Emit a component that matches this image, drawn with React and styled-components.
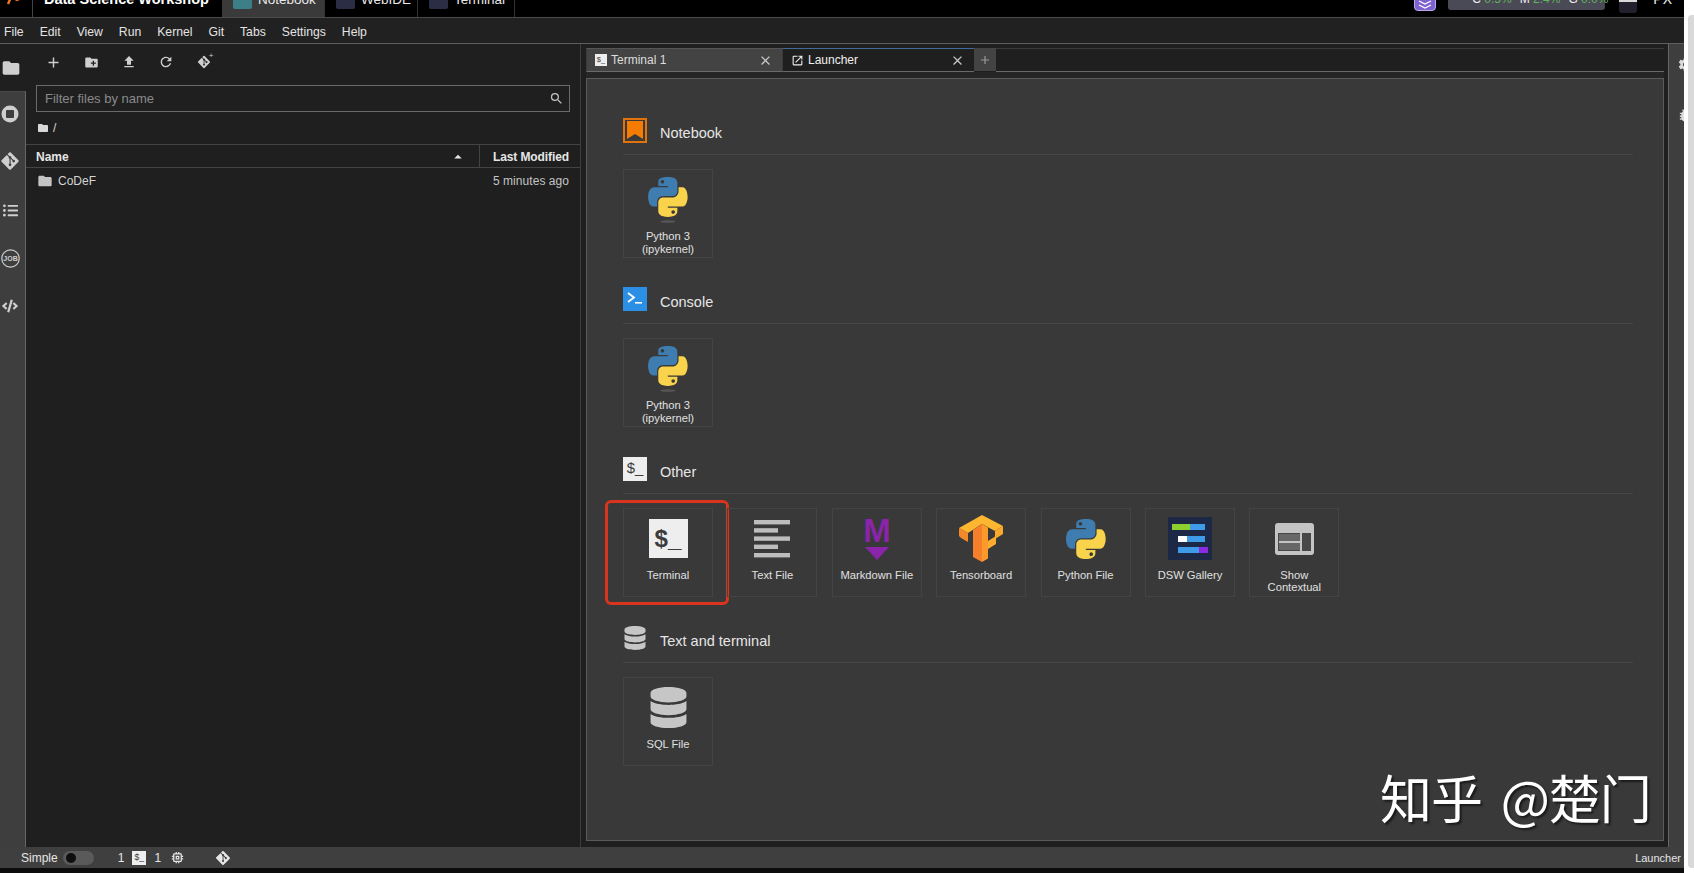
import React from 'react'
import styled, { createGlobalStyle } from 'styled-components'
import { FaGitAlt, FaDatabase, FaListUl, FaCode } from 'react-icons/fa'
import {
  MdAdd, MdCreateNewFolder, MdFileUpload, MdRefresh, MdFolder, MdSearch, MdClose,
  MdOpenInNew, MdArrowDropUp, MdSettings, MdBugReport, MdMemory
} from 'react-icons/md'

const GlobalStyle = createGlobalStyle`
    html, body {
        margin: 0;
        padding: 0;
        background: #fff;
        overflow: hidden;
    }
    * {
        box-sizing: border-box;
    }
`

const Page = styled.div`
    position: relative;
    width: 1694px;
    height: 873px;
    display: flex;
    overflow: hidden;
    font-family: "Liberation Sans", Arial, sans-serif;
`
const Frame = styled.div`
    width: 1684px;
    height: 100%;
    display: flex;
    flex-direction: column;
    background: #0c0c0c;
`
const ScrollStrip = styled.div`
    width: 10px;
    height: 100%;
    padding: 15px 0 5px 4px;
    background: #fff;
`
const ScrollThumb = styled.div`
    width: 100%;
    height: 100%;
    background: #d9d9d9;
    border-radius: 4px 0 0 4px;
`

/* top bar, cut by the top of the window */
const TopBar = styled.div`
    height: 18px;
    flex: none;
    display: flex;
    align-items: flex-end;
    overflow: hidden;
    background: #000;
    border-bottom: 1px solid #4a4a4a;
    color: #fff;
`
const LogoCell = styled.div`
    width: 33px;
    height: 36px;
    flex: none;
    display: flex;
    align-items: center;
    padding-left: 5px;
    border-right: 1px solid #444;
`
const Brand = styled.div`
    width: 189px;
    height: 36px;
    flex: none;
    padding-left: 11px;
    line-height: 36px;
    font-size: 14.5px;
    font-weight: 700;
`
const TopTab = styled.div`
    width: ${props => props.$width}px;
    height: 36px;
    flex: none;
    display: flex;
    align-items: center;
    gap: 6px;
    padding-left: 11px;
    font-size: 13.5px;
    color: #e8e8e8;
    background: ${props => props.$active ? '#3a3a3a' : 'transparent'};
    border-right: 1px solid #333;
`
const TopTabIcon = styled.div`
    width: 19px;
    height: 20px;
    border-radius: 2px;
    background: ${props => props.$color};
`
const TopRight = styled.div`
    margin-left: auto;
    display: flex;
    align-items: flex-end;
    padding-bottom: 7px;
    padding-right: 12px;
`
const PurpleBadge = styled.div`
    width: 22px;
    height: 22px;
    margin-right: 12px;
    margin-bottom: -1px;
    display: flex;
    align-items: flex-end;
    justify-content: center;
    border-radius: 4px;
    background: #7e62d0;
    border: 1px solid #b9a8ee;
`
const ResourceBox = styled.div`
    width: 157px;
    height: 24px;
    margin-right: 14px;
    padding: 0 24px;
    border-radius: 3px;
    background: #4a4a56;
    font-size: 12px;
    line-height: 26px;
    color: #eee;
    white-space: nowrap;
`
const Green = styled.span`
    color: #63b35f;
    margin-right: 8px;
`
const Avatar = styled.div`
    width: 18px;
    height: 24px;
    margin-right: 16px;
    margin-bottom: -3px;
    border-radius: 0 0 3px 3px;
    background: linear-gradient(#d9d9d9 0 55%, #22202c 55%);
`
const UserText = styled.div`
    font-size: 14px;
    line-height: 14px;
    margin-bottom: 4px;
    color: #eee;
`

const MenuBar = styled.div`
    height: 26px;
    flex: none;
    display: flex;
    align-items: center;
    gap: 16px;
    padding: 3px 4px 0;
    background: #212121;
    border-bottom: 1px solid #5e5e5e;
    font-size: 12.2px;
    color: #e4e4e4;
`

const Body = styled.div`
    flex: 1;
    min-height: 0;
    display: flex;
    background: #1f1f1f;
`
const SideBar = styled.div`
    width: 26px;
    flex: none;
    display: flex;
    flex-direction: column;
    color: #cfcfcf;
`
const SideButton = styled.div`
    height: ${props => props.$height || 48}px;
    flex: none;
    display: flex;
    align-items: center;
    justify-content: center;
    padding-right: 5px;
`
const SideRest = styled.div`
    flex: 1;
    display: flex;
    flex-direction: column;
    background: #3e3e3e;
    border-top: 1px solid #4a4a4a;
    border-right: 1px solid #666;
`

const FilePanel = styled.div`
    width: 555px;
    flex: none;
    display: flex;
    flex-direction: column;
    background: #1f1f1f;
    border-right: 1px solid #3d3d3d;
`
const FileTools = styled.div`
    height: 41px;
    flex: none;
    display: flex;
    align-items: center;
    padding: 0 0 5px 9px;
    color: #cfcfcf;
`
const ToolButton = styled.div`
    width: 37.5px;
    display: flex;
    justify-content: center;
    position: relative;
`
const Spark = styled.span`
    position: absolute;
    top: -3px;
    right: 9px;
    font-size: 8px;
    line-height: 8px;
`
const FilterBox = styled.div`
    height: 27px;
    flex: none;
    margin: 0 10px;
    display: flex;
    align-items: center;
    padding: 0 5px 0 8px;
    border: 1px solid #6a6a6a;
    color: #c4c4c4;
`
const FilterInput = styled.input`
    flex: 1;
    min-width: 0;
    border: 0;
    outline: 0;
    padding: 0;
    background: transparent;
    font-family: inherit;
    font-size: 13px;
    color: #eee;
    &::placeholder {
        color: #8a8a8a;
        opacity: 1;
    }
`
const Crumbs = styled.div`
    height: 32px;
    flex: none;
    display: flex;
    align-items: center;
    gap: 4px;
    padding-left: 11px;
    font-size: 12px;
    color: #d8d8d8;
`
const ListHeader = styled.div`
    height: 24px;
    flex: none;
    display: flex;
    align-items: center;
    border-top: 1px solid #444;
    border-bottom: 1px solid #444;
    font-size: 12px;
    font-weight: 700;
    color: #e6e6e6;
`
const NameHead = styled.div`
    flex: 1;
    display: flex;
    align-items: center;
    justify-content: space-between;
    height: 100%;
    padding: 1px 12px 0 10px;
    border-right: 1px solid #444;
`
const ModifiedHead = styled.div`
    width: 100px;
    padding: 1px 11px 0 0;
    text-align: right;
    letter-spacing: -0.1px;
`
const FileRow = styled.div`
    height: 24px;
    flex: none;
    display: flex;
    align-items: center;
    gap: 5px;
    padding: 2px 11px 0;
    font-size: 12px;
    color: #d4d4d4;
`
const FileTime = styled.div`
    margin-left: auto;
    color: #c4c4c4;
    letter-spacing: 0.05px;
`

const MainArea = styled.div`
    flex: 1;
    min-width: 0;
    display: flex;
    flex-direction: column;
    padding: 4px 4px 6px 5px;
`
const TabBar = styled.div`
    height: 24px;
    flex: none;
    display: flex;
`
const Tab = styled.div`
    width: ${props => props.$width}px;
    height: 24px;
    flex: none;
    display: flex;
    align-items: center;
    gap: 4px;
    padding: 0 8px;
    font-size: 12px;
    color: ${props => props.$active ? '#f0f0f0' : '#dedede'};
    background: ${props => props.$active ? '#1f1f1f' : '#434343'};
    border-top: 1px solid ${props => props.$active ? '#3f6a9a' : '#555'};
    border-bottom: 1px solid #6a6a6a;
    border-left: 1px solid #3a3a3a;
`
const TabClose = styled.div`
    margin-left: auto;
    display: flex;
    margin-right: 1px;
    color: #c8c8c8;
`
const PlusTab = styled.div`
    width: 22px;
    height: 23px;
    display: flex;
    align-items: center;
    justify-content: center;
    background: #434343;
    color: #9a9a9a;
`
const TabGap = styled.div`
    flex: 1;
    border-bottom: 1px solid #6a6a6a;
    border-top: 1px solid #3a3a3a;
`
const TabStrip = styled.div`
    height: 6px;
    flex: none;
    background: #262626;
`
const Launcher = styled.div`
    flex: 1;
    min-height: 0;
    padding: 39px 30px 0 36px;
    background: #393939;
    border: 1px solid #5a5a5a;
`
const Section = styled.div`
    margin-bottom: 29.3px;
`
const SectionHead = styled.div`
    height: 37px;
    display: flex;
    gap: 13px;
    border-bottom: 1px solid #464646;
`
const SectionTitle = styled.div`
    padding-top: 7px;
    font-size: 14.5px;
    color: #e6e6e6;
`
const SectionIcon = styled.div`
    width: 24px;
    height: 24px;
    flex: none;
    display: flex;
    align-items: center;
    justify-content: center;
    color: #c6c6c6;
`
const Cards = styled.div`
    display: flex;
    gap: 14.4px;
    margin-top: 14px;
`
const Card = styled.div`
    position: relative;
    width: 90px;
    height: 89px;
    flex: none;
    border: 1px solid #444;
    display: flex;
    flex-direction: column;
    align-items: center;
`
const CardIcon = styled.div`
    height: 60px;
    flex: none;
    display: flex;
    align-items: center;
    justify-content: center;
    color: #c6c6c6;
`
const CardLabel = styled.div`
    width: 88px;
    text-align: center;
    font-size: 11.2px;
    line-height: 12.5px;
    color: #e0e0e0;
`
const Highlight = styled.div`
    position: absolute;
    top: -9px;
    bottom: -9px;
    left: -19px;
    right: -17px;
    border: 3px solid #d8341e;
    border-radius: 6px;
    pointer-events: none;
`
const TerminalGlyph = styled.div`
    width: ${props => props.$size}px;
    height: ${props => props.$size}px;
    flex: none;
    display: flex;
    align-items: center;
    justify-content: center;
    background: #eeeeee;
    color: #3c3c3c;
    font-family: "Liberation Sans", Arial, sans-serif;
    font-size: ${props => props.$size * 0.62}px;
    font-weight: ${props => props.$size > 30 ? 700 : 400};
    line-height: 1;
`
const RightBar = styled.div`
    width: 16px;
    flex: none;
    display: flex;
    flex-direction: column;
    gap: 34px;
    padding: 12px 0 0 8px;
    overflow: hidden;
    background: #3e3e3e;
    border-left: 1px solid #666;
    color: #dcdcdc;
`

const StatusBar = styled.div`
    height: 21px;
    flex: none;
    display: flex;
    align-items: center;
    padding: 0 3px 0 21px;
    background: #3f3f3f;
    font-size: 12px;
    color: #e6e6e6;
`
const StatusToggle = styled.div`
    width: 31px;
    height: 14px;
    margin: 0 24px 0 5px;
    padding: 2px 3px;
    border-radius: 7px;
    background: #5a5a5a;
`
const ToggleKnob = styled.div`
    width: 10px;
    height: 10px;
    border-radius: 50%;
    background: #0e0e0e;
`
const StatusItem = styled.div`
    display: flex;
    align-items: center;
    margin-right: ${props => props.$gap || 0}px;
`
const StatusRight = styled.div`
    margin-left: auto;
    font-size: 11px;
`
const Foot = styled.div`
    height: 5px;
    flex: none;
`
const Watermark = styled.div`
    position: absolute;
    left: 1380px;
    top: 767px;
    font-family: "Noto Sans CJK SC", sans-serif;
    font-size: 52px;
    font-weight: 400;
    letter-spacing: -1px;
    word-spacing: 8px;
    line-height: 60px;
    color: #fff;
    white-space: nowrap;
    text-shadow: 2px 2px 2px rgba(0, 0, 0, 0.55);
`

const pythonBlue = "M54.919 0.001c-4.584.022-8.961.413-12.812 1.095C30.762 3.099 28.7 7.295 28.7 15.032v10.219h26.812v3.406H18.637c-7.792 0-14.616 4.684-16.75 13.594-2.462 10.213-2.571 16.586 0 27.25 1.906 7.938 6.458 13.594 14.25 13.594h9.219V70.344c0-8.85 7.657-16.656 16.75-16.656h26.781c7.455 0 13.406-6.138 13.406-13.625V15.032c0-7.266-6.13-12.725-13.406-13.937C64.282.328 59.502-.02 54.919.001zM40.419 8.22c2.77 0 5.031 2.299 5.031 5.125 0 2.816-2.262 5.094-5.031 5.094-2.78 0-5.031-2.278-5.031-5.094 0-2.826 2.252-5.125 5.031-5.125z"
const pythonYellow = "M85.638 28.657v11.906c0 9.231-7.826 17-16.75 17H42.106c-7.336 0-13.406 6.279-13.406 13.625v25.531c0 7.266 6.319 11.54 13.406 13.625 8.487 2.496 16.626 2.947 26.781 0 6.75-1.955 13.406-5.888 13.406-13.625V86.5H55.513v-3.405H95.7c7.792 0 10.696-5.436 13.406-13.594 2.799-8.399 2.68-16.476 0-27.25-1.926-7.757-5.604-13.594-13.406-13.594H85.638zM70.575 93.313c2.78 0 5.031 2.278 5.031 5.094 0 2.826-2.252 5.125-5.031 5.125-2.77 0-5.031-2.299-5.031-5.125 0-2.816 2.262-5.094 5.031-5.094z"

const PythonIcon = () => (
    <svg width="40" height="40" viewBox="0 0 112 112">
        <path fill="#3f7cb0" d={pythonBlue} />
        <path fill="#f9d34c" d={pythonYellow} />
    </svg>
)

// kernel logo has a soft shadow below, so it sits a bit higher in the card
const KernelIcon = () => (
    <svg width="40" height="47" viewBox="0 0 112 132">
        <path fill="#3f7cb0" d={pythonBlue} />
        <path fill="#f9d34c" d={pythonYellow} />
        <ellipse cx="56" cy="125" rx="22" ry="3.5" fill="#575757" />
    </svg>
)

const NotebookIcon = () => (
    <svg width="24" height="25" viewBox="0 0 24 25">
        <rect x="1" y="1" width="22" height="23" fill="none" stroke="#e0730b" strokeWidth="2" />
        <path fill="#f57c00" d="M4 3h16v18l-8-5-8 5z" />
    </svg>
)

const ConsoleIcon = () => (
    <svg width="24" height="24" viewBox="0 0 24 24">
        <rect width="24" height="24" fill="#2b8fe6" />
        <polyline points="5,6 11,10.5 5,15" fill="none" stroke="#fff" strokeWidth="1.8" />
        <rect x="12" y="15" width="7" height="1.6" fill="#fff" />
    </svg>
)

const TextFileIcon = () => (
    <svg width="36" height="38" viewBox="0 0 36 38">
        <rect width="36" height="4.4" y="0" fill="#bdbdbd" />
        <rect width="24" height="4.4" y="8.2" fill="#bdbdbd" />
        <rect width="36" height="4.4" y="16.4" fill="#bdbdbd" />
        <rect width="24" height="4.4" y="24.6" fill="#bdbdbd" />
        <rect width="36" height="4.4" y="33" fill="#bdbdbd" />
    </svg>
)

const MarkdownIcon = () => (
    <svg width="28" height="44" viewBox="0 0 28 44">
        <text x="14" y="25" textAnchor="middle" fontFamily="Liberation Sans" fontWeight="700" fontSize="33" fill="#8a24a8">M</text>
        <polygon points="2,30 26,30 14,43" fill="#8a24a8" />
    </svg>
)

const TensorboardIcon = () => (
    <svg width="44" height="47" viewBox="0 0 44 47">
        <polygon points="23,0 44,11 36,16 23,9 9,18 0,13" fill="#fdb62f" />
        <polygon points="0,13 9,18 9,27 2,23 0,21" fill="#f4892a" />
        <polygon points="44,11 44,19 36,24 36,16" fill="#fba92c" />
        <polygon points="14,15 23,9 23,47 14,42" fill="#f57f2b" />
        <polygon points="23,9 29,12.5 29,43.5 23,47" fill="#fb9a2b" />
        <polygon points="29,26 37,21 37,29 29,34" fill="#fbab2d" />
    </svg>
)

const GalleryIcon = () => (
    <svg width="44" height="43" viewBox="0 0 44 43">
        <rect width="44" height="43" fill="#1d2847" />
        <rect x="4" y="7" width="18" height="6" fill="#8ccf2f" />
        <rect x="22" y="7" width="15" height="6" fill="#3f9be8" />
        <rect x="10" y="19" width="9" height="6" fill="#fff" />
        <rect x="19" y="19" width="18" height="6" fill="#3f9be8" />
        <rect x="10" y="30" width="21" height="6" fill="#3f9be8" />
        <rect x="31" y="30" width="9" height="6" fill="#8a2be2" />
    </svg>
)

const ContextualIcon = () => (
    <svg width="39" height="32" viewBox="0 0 39 32">
        <rect width="39" height="32" rx="3" fill="#c4c4c4" />
        <rect x="3" y="10" width="33" height="18" fill="#484848" />
        <rect x="4" y="11" width="21" height="7" fill="#c4c4c4" opacity="0.25" />
        <rect x="4" y="20" width="21" height="7" fill="#c4c4c4" opacity="0.25" />
        <rect x="4" y="18" width="21" height="2" fill="#c4c4c4" />
        <rect x="25" y="10" width="2" height="18" fill="#c4c4c4" />
    </svg>
)

const StopIcon = () => (
    <svg width="18" height="18" viewBox="0 0 18 18">
        <circle cx="9" cy="9" r="8.5" fill="#cfcfcf" />
        <rect x="5" y="5" width="8" height="8" rx="1" fill="#3e3e3e" />
    </svg>
)

const JobIcon = () => (
    <svg width="19" height="19" viewBox="0 0 19 19">
        <circle cx="9.5" cy="9.5" r="8.7" fill="none" stroke="#cfcfcf" strokeWidth="1.2" />
        <text x="9.5" y="12" textAnchor="middle" fontFamily="Liberation Sans" fontWeight="700" fontSize="7" fill="#cfcfcf">JOB</text>
    </svg>
)

const LogoIcon = () => (
    <svg width="18" height="18" viewBox="0 0 18 18">
        <path d="M2 4l10 6 4-2M6 7l-3 7" fill="none" stroke="#f0742a" strokeWidth="2.4" />
    </svg>
)

const StackIcon = () => (
    <svg width="14" height="12" viewBox="0 0 14 12">
        <path d="M1 3l6 3 6-3M1 7l6 3 6-3" fill="none" stroke="#fff" strokeWidth="1.3" />
    </svg>
)

const sections = [
    { title: 'Notebook', icon: <NotebookIcon />, cards: [{ label: ['Python 3', '(ipykernel)'], icon: <KernelIcon /> }] },
    { title: 'Console', icon: <ConsoleIcon />, cards: [{ label: ['Python 3', '(ipykernel)'], icon: <KernelIcon /> }] },
    {
        title: 'Other',
        icon: <TerminalGlyph $size={24}>$_</TerminalGlyph>,
        cards: [
            { label: ['Terminal'], icon: <TerminalGlyph $size={39}>$_</TerminalGlyph>, marked: true },
            { label: ['Text File'], icon: <TextFileIcon /> },
            { label: ['Markdown File'], icon: <MarkdownIcon /> },
            { label: ['Tensorboard'], icon: <TensorboardIcon /> },
            { label: ['Python File'], icon: <PythonIcon /> },
            { label: ['DSW Gallery'], icon: <GalleryIcon /> },
            { label: ['Show', 'Contextual'], icon: <ContextualIcon /> },
        ],
    },
    { title: 'Text and terminal', icon: <FaDatabase size={24} />, cards: [{ label: ['SQL File'], icon: <FaDatabase size={41} /> }] },
]

const menus = ['File', 'Edit', 'View', 'Run', 'Kernel', 'Git', 'Tabs', 'Settings', 'Help']

const App = () => {
    return (
        <Page>
            <GlobalStyle />
            <Frame>
                <TopBar>
                    <LogoCell><LogoIcon /></LogoCell>
                    <Brand>Data Science Workshop</Brand>
                    <TopTab $width={103} $active><TopTabIcon $color="#3d7f86" />Notebook</TopTab>
                    <TopTab $width={93}><TopTabIcon $color="#2b2d45" />WebIDE</TopTab>
                    <TopTab $width={97}><TopTabIcon $color="#2b2d45" />Terminal</TopTab>
                    <TopRight>
                        <PurpleBadge><StackIcon /></PurpleBadge>
                        <ResourceBox>C <Green>0.5%</Green>M <Green>2.4%</Green>G <Green>0.0%</Green></ResourceBox>
                        <Avatar />
                        <UserText>PX</UserText>
                    </TopRight>
                </TopBar>
                <MenuBar>
                    {menus.map(m => <div key={m}>{m}</div>)}
                </MenuBar>
                <Body>
                    <SideBar>
                        <SideButton $height={47}><MdFolder size={20} /></SideButton>
                        <SideRest>
                            <SideButton $height={44}><StopIcon /></SideButton>
                            <SideButton $height={50}><FaGitAlt size={20} /></SideButton>
                            <SideButton $height={48}><FaListUl size={15} /></SideButton>
                            <SideButton $height={48}><JobIcon /></SideButton>
                            <SideButton $height={48}><FaCode size={16} /></SideButton>
                        </SideRest>
                    </SideBar>
                    <FilePanel>
                        <FileTools>
                            <ToolButton><MdAdd size={17} /></ToolButton>
                            <ToolButton><MdCreateNewFolder size={15} /></ToolButton>
                            <ToolButton><MdFileUpload size={16} /></ToolButton>
                            <ToolButton><MdRefresh size={16} /></ToolButton>
                            <ToolButton><FaGitAlt size={14} /><Spark>+</Spark></ToolButton>
                        </FileTools>
                        <FilterBox>
                            <FilterInput placeholder="Filter files by name" readOnly />
                            <MdSearch size={15} />
                        </FilterBox>
                        <Crumbs><MdFolder size={12} />/</Crumbs>
                        <ListHeader>
                            <NameHead>Name<MdArrowDropUp size={18} /></NameHead>
                            <ModifiedHead>Last Modified</ModifiedHead>
                        </ListHeader>
                        <FileRow>
                            <MdFolder size={16} color="#c4c4c4" />CoDeF
                            <FileTime>5 minutes ago</FileTime>
                        </FileRow>
                    </FilePanel>
                    <MainArea>
                        <TabBar>
                            <Tab $width={196}><TerminalGlyph $size={12}>$_</TerminalGlyph>Terminal 1<TabClose><MdClose size={15} /></TabClose></Tab>
                            <Tab $width={192} $active><MdOpenInNew size={13} />Launcher<TabClose><MdClose size={15} /></TabClose></Tab>
                            <PlusTab><MdAdd size={14} /></PlusTab>
                            <TabGap />
                        </TabBar>
                        <TabStrip />
                        <Launcher>
                            {sections.map(section => (
                                <Section key={section.title}>
                                    <SectionHead>
                                        <SectionIcon>{section.icon}</SectionIcon>
                                        <SectionTitle>{section.title}</SectionTitle>
                                    </SectionHead>
                                    <Cards>
                                        {section.cards.map(card => (
                                            <Card key={card.label.join(' ')}>
                                                <CardIcon>{card.icon}</CardIcon>
                                                <CardLabel>{card.label.map(line => <div key={line}>{line}</div>)}</CardLabel>
                                                {card.marked && <Highlight />}
                                            </Card>
                                        ))}
                                    </Cards>
                                </Section>
                            ))}
                        </Launcher>
                    </MainArea>
                    <RightBar>
                        <MdSettings size={17} />
                        <MdBugReport size={17} />
                    </RightBar>
                </Body>
                <StatusBar>
                    Simple
                    <StatusToggle><ToggleKnob /></StatusToggle>
                    <StatusItem $gap={8}>1</StatusItem>
                    <StatusItem $gap={8}><TerminalGlyph $size={14}>$_</TerminalGlyph></StatusItem>
                    <StatusItem $gap={9}>1</StatusItem>
                    <StatusItem $gap={30}><MdMemory size={15} /></StatusItem>
                    <StatusItem><FaGitAlt size={16} /></StatusItem>
                    <StatusRight>Launcher</StatusRight>
                </StatusBar>
                <Foot />
            </Frame>
            <ScrollStrip><ScrollThumb /></ScrollStrip>
            <Watermark>知乎 @楚门</Watermark>
        </Page>
    )
}

export default App
